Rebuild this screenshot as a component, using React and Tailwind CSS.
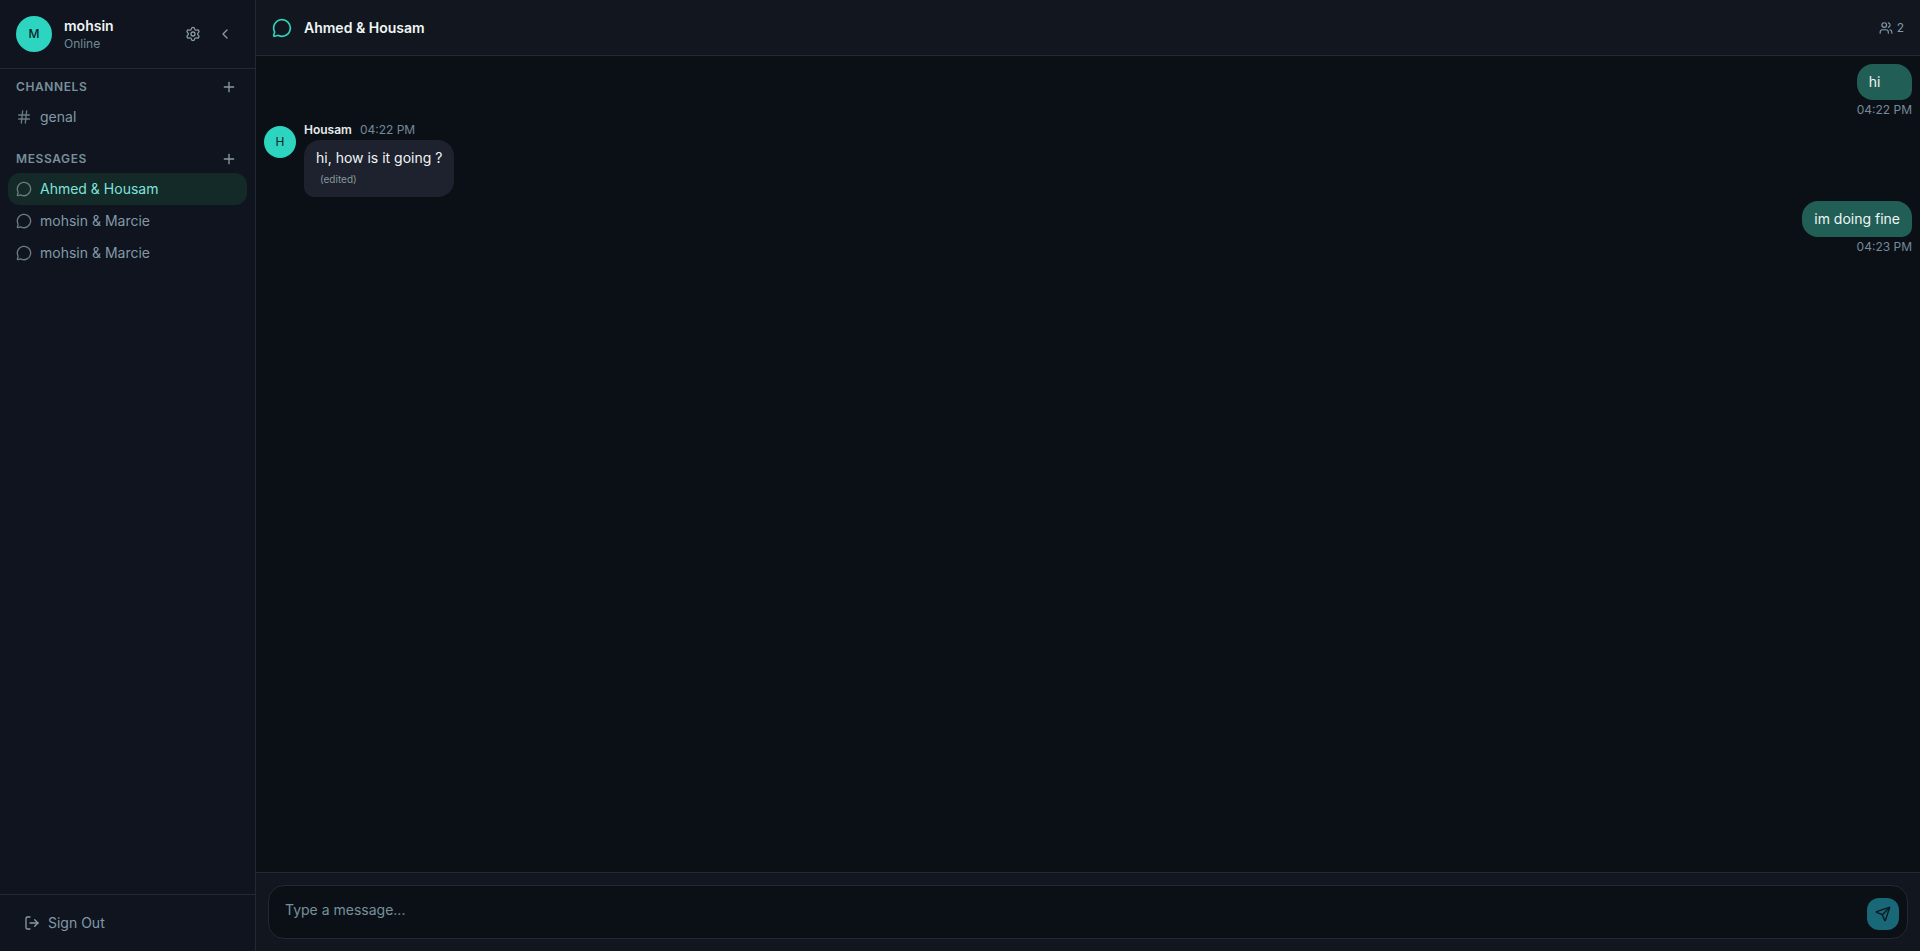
import React, { useState } from 'react';
import { Settings, ChevronLeft, Plus, Hash, MessageCircle, LogOut, Users, Send } from 'lucide-react';

const channels = [{ id: 'c1', name: 'genal' }];

const conversations = [
    { id: 'd1', name: 'Ahmed & Housam' },
    { id: 'd2', name: 'mohsin & Marcie' },
    { id: 'd3', name: 'mohsin & Marcie' },
];

const messages = [
    { id: 1, own: true, text: 'hi', time: '04:22 PM' },
    { id: 2, own: false, author: 'Housam', text: 'hi, how is it going ?', time: '04:22 PM', edited: true },
    { id: 3, own: true, text: 'im doing fine', time: '04:23 PM' },
];

function SectionHeader({ title, label }) {
    return (
        <div className="flex h-7 items-center justify-between px-2">
            <h2 className="text-xs font-semibold uppercase tracking-wider text-[#78909c]">{title}</h2>
            <button type="button" aria-label={label} className="flex size-5 items-center justify-center text-[#8a9a9f]">
                <Plus className="size-4" />
            </button>
        </div>
    );
}

function SidebarItem({ icon: Icon, name, active, onClick }) {
    return (
        <button
            type="button"
            onClick={onClick}
            className={`flex h-8 w-full items-center gap-2 rounded-xl px-2 text-left text-sm ${
                active ? 'bg-[#132a28] text-[#7fe3dc]' : 'text-[#8299a8]'
            }`}
        >
            <Icon className="size-4 shrink-0 text-[#6b7c80]" />
            <span className="truncate">{name}</span>
        </button>
    );
}

function Sidebar({ activeId, onSelect }) {
    return (
        <aside className="flex w-64 shrink-0 flex-col border-r border-[#232833] bg-[#0f141e]">
            <div className="flex items-center gap-3 border-b border-[#232833] p-4">
                <div className="flex size-9 shrink-0 items-center justify-center rounded-full bg-[#2dd4bf] text-xs font-medium text-[#0f1e28]">
                    M
                </div>
                <div className="min-w-0 flex-1">
                    <p className="truncate text-sm leading-5 font-semibold text-[#f0f5f5]">mohsin</p>
                    <p className="text-xs text-[#6f8b99]">Online</p>
                </div>
                <div className="flex items-center gap-1">
                    <button type="button" aria-label="Settings" className="flex size-7 items-center justify-center text-[#8a9a9f]">
                        <Settings className="size-4" />
                    </button>
                    <button type="button" aria-label="Collapse sidebar" className="flex size-7 items-center justify-center text-[#8a9a9f]">
                        <ChevronLeft className="size-4" />
                    </button>
                </div>
            </div>

            <nav className="flex flex-1 flex-col gap-3 px-2 pt-1">
                <section>
                    <SectionHeader title="Channels" label="Add channel" />
                    {channels.map((c) => (
                        <SidebarItem key={c.id} icon={Hash} name={c.name} active={c.id === activeId} onClick={() => onSelect(c.id)} />
                    ))}
                </section>
                <section>
                    <SectionHeader title="Messages" label="New message" />
                    {conversations.map((c) => (
                        <SidebarItem key={c.id} icon={MessageCircle} name={c.name} active={c.id === activeId} onClick={() => onSelect(c.id)} />
                    ))}
                </section>
            </nav>

            <div className="border-t border-[#232833] p-3">
                <button type="button" className="flex h-8 w-full items-center gap-2 px-3 text-sm text-[#8299a8]">
                    <LogOut className="size-4 text-[#8a9a9f]" />
                    Sign Out
                </button>
            </div>
        </aside>
    );
}

function OwnMessage({ message }) {
    return (
        <li className="flex justify-end">
            <div className="flex flex-col">
                <p className="rounded-2xl rounded-br-[10px] bg-[#215f56] px-3 py-2 text-sm text-[#f0f5f5]">{message.text}</p>
                <time className="mt-0.5 text-right text-xs text-[#74899a]">{message.time}</time>
            </div>
        </li>
    );
}

function OtherMessage({ message }) {
    return (
        <li className="flex gap-2">
            <div className="mt-1 flex size-8 shrink-0 items-center justify-center rounded-full bg-[#2dd4bf] text-xs text-[#0f1e28]">
                {message.author[0]}
            </div>
            <div>
                <div className="mb-0.5 flex gap-2 text-xs">
                    <span className="font-semibold text-[#e6ecec]">{message.author}</span>
                    <time className="text-[#74899a]">{message.time}</time>
                </div>
                <div className="rounded-2xl rounded-bl-[10px] bg-[#1e222e] px-3 py-2 text-sm text-[#f0f5f5]">
                    <p>{message.text}</p>
                    {message.edited && <p className="mt-[3px] mb-0.5 ml-1 text-[10px] leading-4 text-[#87979a]">(edited)</p>}
                </div>
            </div>
        </li>
    );
}

export default function App() {
    const [activeId, setActiveId] = useState('d1');
    const [draft, setDraft] = useState('');

    return (
        <div className="flex h-screen bg-[#0b1017] font-['Inter',sans-serif]">
            <Sidebar activeId={activeId} onSelect={setActiveId} />

            <main className="flex min-w-0 flex-1 flex-col">
                <header className="flex h-14 items-center gap-3 border-b border-[#232833] bg-[#12171f] px-4">
                    <MessageCircle className="size-5 text-[#2dd4bf]" />
                    <h1 className="flex-1 text-sm font-semibold text-[#f0f5f5]">Ahmed & Housam</h1>
                    <span className="flex items-center gap-1 text-xs text-[#8299a8]">
                        <Users className="size-3.5" />
                        2
                    </span>
                </header>

                <ul className="flex flex-1 flex-col gap-1 overflow-y-auto p-2">
                    {messages.map((m) => (m.own ? <OwnMessage key={m.id} message={m} /> : <OtherMessage key={m.id} message={m} />))}
                </ul>

                <form className="border-t border-[#232833] bg-[#12171f] p-3" onSubmit={(e) => e.preventDefault()}>
                    <div className="flex items-end gap-2 rounded-2xl border border-[#232833] bg-[#0b1017] p-2">
                        <textarea
                            rows={1}
                            aria-label="Message"
                            placeholder="Type a message..."
                            value={draft}
                            onChange={(e) => setDraft(e.target.value)}
                            className="h-9 flex-1 resize-none px-2 py-1.5 text-sm text-[#f0f5f5] outline-none placeholder:text-[#78909c]"
                        />
                        <button type="submit" aria-label="Send" className="flex size-8 items-center justify-center rounded-xl bg-[#196878] text-[#0a1820]">
                            <Send className="size-4" />
                        </button>
                    </div>
                </form>
            </main>
        </div>
    );
}
